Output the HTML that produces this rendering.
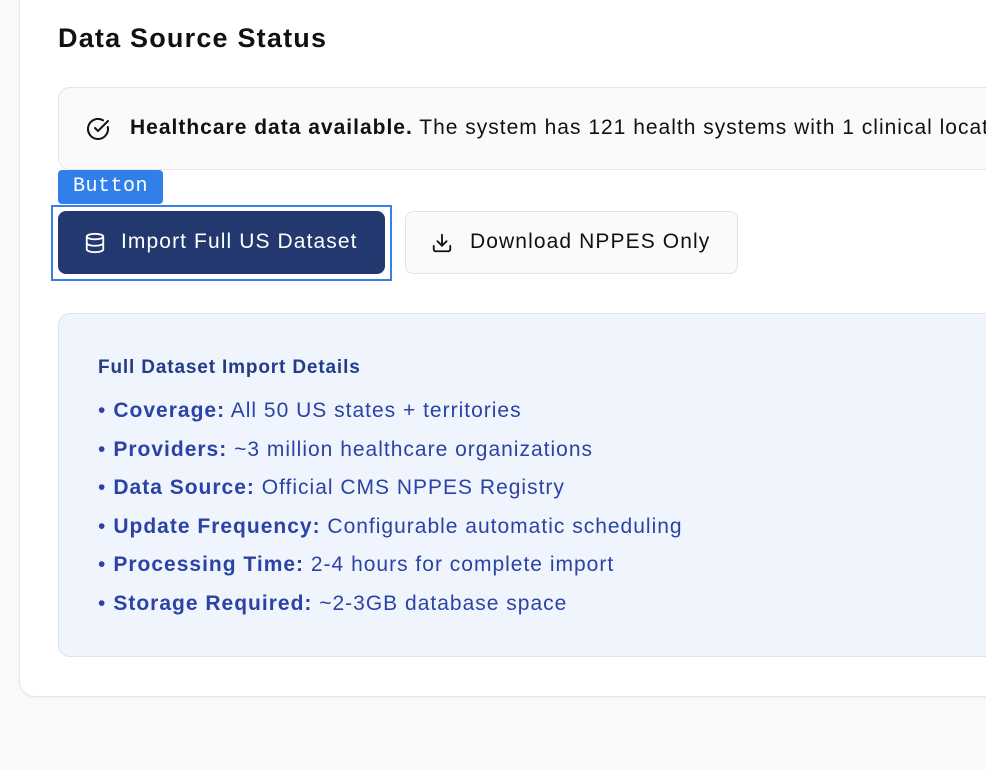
<!DOCTYPE html>
<html><head><meta charset="utf-8"><style>
html,body{margin:0;padding:0;width:986px;height:770px;overflow:hidden;background:#f8f9fb;font-family:"Liberation Sans",sans-serif;}
.card{position:absolute;left:19px;top:-40px;width:1000px;height:735px;background:#fff;border:1px solid #e6e7ea;border-radius:16px;box-shadow:0 1px 2px rgba(0,0,0,.04);}
h1{position:absolute;left:58px;top:23px;margin:0;font-size:27px;font-weight:600;color:#111;letter-spacing:1.2px;}
.alert{position:absolute;left:58px;top:87px;width:960px;height:83px;background:#fafafa;border:1px solid #e5e5e5;border-radius:12px;box-sizing:border-box;}
.alert .t{position:absolute;left:71px;top:28px;font-size:21px;letter-spacing:1px;color:#111;white-space:nowrap;}
.alert svg{position:absolute;left:27px;top:29px;}
.badge{position:absolute;left:58px;top:170px;width:105px;height:34px;background:#3180ea;border-radius:4px;color:#fff;font-family:"Liberation Mono",monospace;font-size:20px;line-height:34px;text-align:center;letter-spacing:0.5px;}
.outline{position:absolute;left:51px;top:205px;width:337px;height:72px;border:2px solid #3a7fe6;}
.b1{position:absolute;left:58px;top:211px;width:327px;height:63px;background:#22386f;border-radius:8px;color:#fff;font-size:21px;letter-spacing:1.1px;}
.b1 span{position:absolute;left:63px;top:19px;}
.b1 svg{position:absolute;left:26px;top:21px;}
.b2{position:absolute;left:405px;top:211px;width:333px;height:63px;background:#fafafa;border:1px solid #e3e3e3;border-radius:8px;box-sizing:border-box;color:#111;font-size:21px;letter-spacing:1.1px;}
.b2 span{position:absolute;left:64px;top:18px;}
.b2 svg{position:absolute;left:25px;top:20px;}
.info{position:absolute;left:58px;top:313px;width:960px;height:344px;background:#eff4fd;border:1px solid #dbe3f2;border-radius:12px;box-sizing:border-box;color:#2a43a5;}
.info h3{position:absolute;left:39px;top:43px;margin:0;font-size:19px;letter-spacing:0.85px;font-weight:600;color:#233c88;}
.info ul{position:absolute;left:39px;top:83px;margin:0;padding:0;list-style:none;font-size:21px;letter-spacing:1px;}
.info li{height:38.5px;line-height:28px;white-space:nowrap;}
.info li:before{content:"•";margin-right:7px;}
</style></head><body>
<div class="card"></div>
<h1>Data Source Status</h1>
<div class="alert">
<svg width="24" height="24" viewBox="0 0 24 24" fill="none" stroke="#111" stroke-width="2" stroke-linecap="round" stroke-linejoin="round"><path d="M21.8 10A10 10 0 1 1 17 3.3"/><path d="m9 11 3 3L22 4"/></svg>
<div class="t"><b>Healthcare data available.</b> The system has 121 health systems with 1 clinical locations loaded.</div>
</div>
<div class="badge">Button</div>
<div class="outline"></div>
<div class="b1"><svg width="22" height="22" viewBox="0 0 24 24" fill="none" stroke="#fff" stroke-width="2" stroke-linecap="round" stroke-linejoin="round"><ellipse cx="12" cy="5" rx="9" ry="3"/><path d="M3 5v14a9 3 0 0 0 18 0V5"/><path d="M3 12a9 3 0 0 0 18 0"/></svg><span>Import Full US Dataset</span></div>
<div class="b2"><svg width="22" height="22" viewBox="0 0 24 24" fill="none" stroke="#111" stroke-width="2" stroke-linecap="round" stroke-linejoin="round"><path d="M21 15v4a2 2 0 0 1-2 2H5a2 2 0 0 1-2-2v-4"/><path d="m7 10 5 5 5-5"/><path d="M12 15V3"/></svg><span>Download NPPES Only</span></div>
<div class="info">
<h3>Full Dataset Import Details</h3>
<ul>
<li><b>Coverage:</b> All 50 US states + territories</li>
<li><b>Providers:</b> ~3 million healthcare organizations</li>
<li><b>Data Source:</b> Official CMS NPPES Registry</li>
<li><b>Update Frequency:</b> Configurable automatic scheduling</li>
<li><b>Processing Time:</b> 2-4 hours for complete import</li>
<li><b>Storage Required:</b> ~2-3GB database space</li>
</ul>
</div>
</body></html>
